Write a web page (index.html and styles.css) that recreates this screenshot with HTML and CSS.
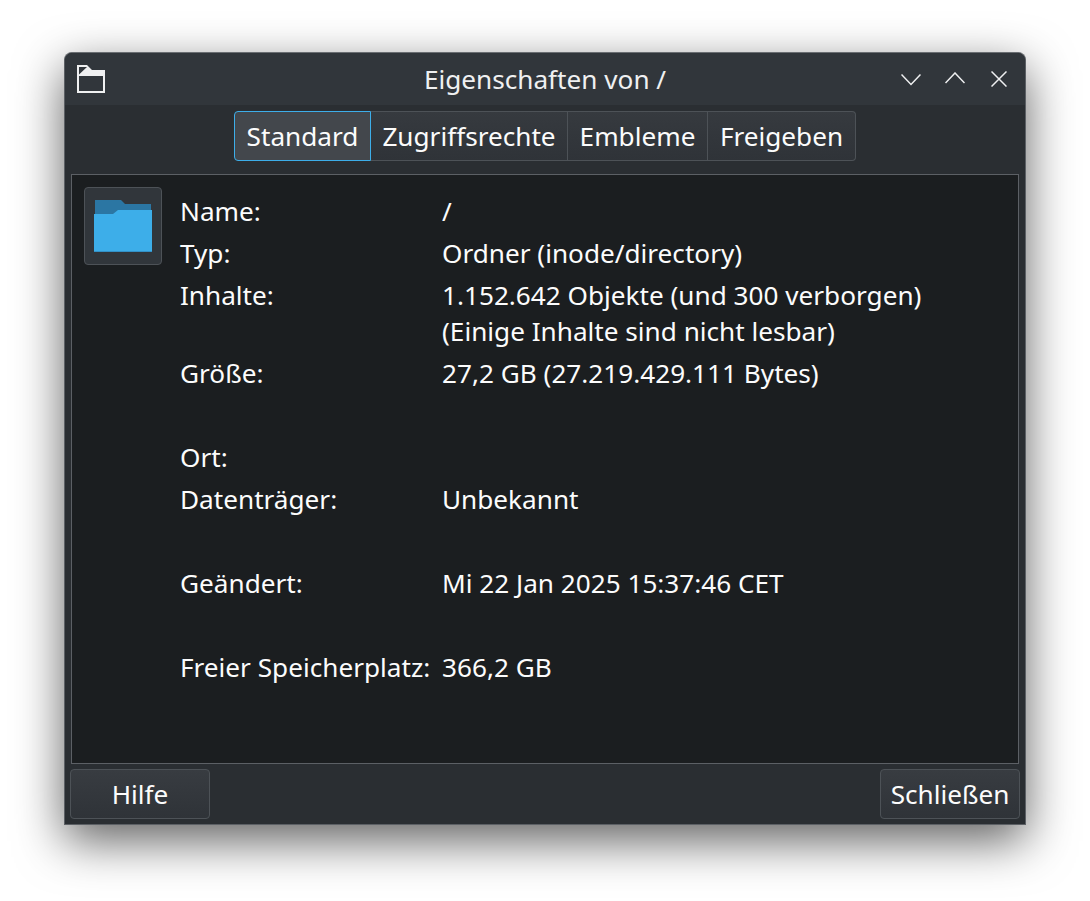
FILE: index.html
```html
<!DOCTYPE html>
<html lang="de">
<head>
<meta charset="utf-8">
<title>Eigenschaften von /</title>
<link rel="stylesheet" href="styles.css">
</head>
<body>
<div class="window">
  <header class="titlebar">
    <svg class="app-icon" width="28" height="28" viewBox="0 0 28 28">
      <path fill-rule="evenodd" d="M0 0H10L15 5H28V28H0ZM2 2V9.500L10 2ZM2 11V26H26V11Z" fill="#eff0f1"/>
    </svg>
    <h1 class="title">Eigenschaften von /</h1>
    <div class="controls">
      <svg class="ctl-down" width="20" height="12" viewBox="0 0 20 12"><path d="M0.500 0.500L10 10.500 19.500 0.500" fill="none" stroke="#eff0f1" stroke-width="1.500"/></svg>
      <svg class="ctl-up" width="20" height="12" viewBox="0 0 20 12"><path d="M0.500 11L10 1 19.500 11" fill="none" stroke="#eff0f1" stroke-width="1.500"/></svg>
      <svg class="ctl-close" width="16" height="16" viewBox="0 0 16 16"><path d="M0.500 0.500L15.500 15.500M15.500 0.500L0.500 15.500" fill="none" stroke="#eff0f1" stroke-width="1.500"/></svg>
    </div>
  </header>
  <nav class="tabs">
    <span class="tab tab-active">Standard</span>
    <span class="tab tab-2">Zugriffsrechte</span>
    <span class="tab tab-3">Embleme</span>
    <span class="tab tab-4">Freigeben</span>
  </nav>
  <main class="panel">
    <div class="icon-box">
      <svg width="58" height="52" viewBox="0 0 58 52">
        <path d="M1 0H27L31 4H57V14H1Z" fill="#2b76a3"/>
        <path d="M0 14H19L24 10H58V52H0Z" fill="#3daee9"/>
        <path d="M0 51H58V52H0Z" fill="#3391c7"/>
      </svg>
    </div>
    <dl class="props">
      <dt>Name:</dt><dd>/</dd>
      <dt>Typ:</dt><dd>Ordner (inode/directory)</dd>
      <dt>Inhalte:</dt><dd>1.152.642 Objekte (und 300 verborgen)<br>(Einige Inhalte sind nicht lesbar)</dd>
      <dt>Größe:</dt><dd>27,2 GB (27.219.429.111 Bytes)</dd>
      <dt class="blank"></dt><dd class="blank"></dd>
      <dt>Ort:</dt><dd></dd>
      <dt>Datenträger:</dt><dd>Unbekannt</dd>
      <dt class="blank"></dt><dd class="blank"></dd>
      <dt>Geändert:</dt><dd>Mi 22 Jan 2025 15:37:46 CET</dd>
      <dt class="blank"></dt><dd class="blank"></dd>
      <dt>Freier Speicherplatz:</dt><dd>366,2 GB</dd>
    </dl>
  </main>
  <footer class="footer">
    <span class="btn">Hilfe</span>
    <span class="btn">Schließen</span>
  </footer>
</div>
</body>
</html>
```
FILE: styles.css
```css
* { box-sizing: border-box; }
html, body { margin: 0; height: 100%; background: #fff; }
body {
  padding: 52px 64px 0 64px;
  font-family: "Noto Sans", sans-serif;
  font-size: 26.16px;
  color: #fcfcfc;
  overflow: hidden;
}
.window {
  width: 962px;
  height: 773px;
  background: #2a2e32;
  border: 1px solid #5c6065;
  border-top-color: #6a6e72;
  border-radius: 8px 8px 0 0;
  box-shadow: 0 16px 48px rgba(0, 0, 0, .62);
  display: flex;
  flex-direction: column;
}
.titlebar {
  height: 52px;
  flex: none;
  background: #31363b;
  border-radius: 7px 7px 0 0;
  display: flex;
  align-items: center;
  padding: 0 18px 2px 12px;
  position: relative;
}
.app-icon { display: block; margin-top: 2px; }
.title {
  margin: 0;
  position: absolute;
  left: 0;
  right: 0;
  top: 0;
  text-align: center;
  font-size: 26.16px;
  font-weight: 400;
  line-height: 52px;
  color: #eff0f1;
}
.controls {
  margin-left: auto;
  align-self: flex-start;
  display: flex;
  align-items: flex-start;
}
.ctl-down { margin-top: 21px; }
.ctl-up { margin: 19px 0 0 24px; }
.ctl-close { margin: 18px 0 0 26px; }
.tabs {
  height: 50px;
  margin: 6px 0 13px;
  flex: none;
  display: flex;
  justify-content: center;
}
.tab {
  height: 50px;
  line-height: 48px;
  text-align: center;
  background: linear-gradient(#363a3f, #2f3338);
  border: 1px solid #4d5257;
  border-left: 0;
}
.tab-active {
  width: 137px;
  background: #43474c;
  border: 1px solid #3daee9;
  border-radius: 4px 0 0 4px;
}
.tab-2 { width: 197px; }
.tab-3 { width: 140px; }
.tab-4 { width: 148px; border-radius: 0 4px 4px 0; }
.panel {
  height: 590px;
  flex: none;
  margin: 0 6px;
  background: #1b1e20;
  border: 1px solid #5c6065;
  display: flex;
  padding: 12px 0 0 12px;
}
.icon-box {
  width: 78px;
  height: 78px;
  flex: none;
  background: #31363b;
  border: 1px solid #4d5257;
  border-radius: 4px;
  display: flex;
  align-items: flex-start;
  justify-content: center;
  padding-top: 12px;
}
.props {
  margin: 6px 0 0 18px;
  display: grid;
  grid-template-columns: 262px 1fr;
  row-gap: 6px;
  line-height: 36px;
  align-content: start;
}
.props dt, .props dd { margin: 0; }
.blank { height: 36px; }
.footer {
  flex: none;
  display: flex;
  justify-content: space-between;
  padding: 5px 5px 0;
}
.btn {
  width: 140px;
  height: 50px;
  line-height: 48px;
  text-align: center;
  background: linear-gradient(#383c41, #2f3338);
  border: 1px solid #4d5257;
  border-radius: 4px;
}
```
